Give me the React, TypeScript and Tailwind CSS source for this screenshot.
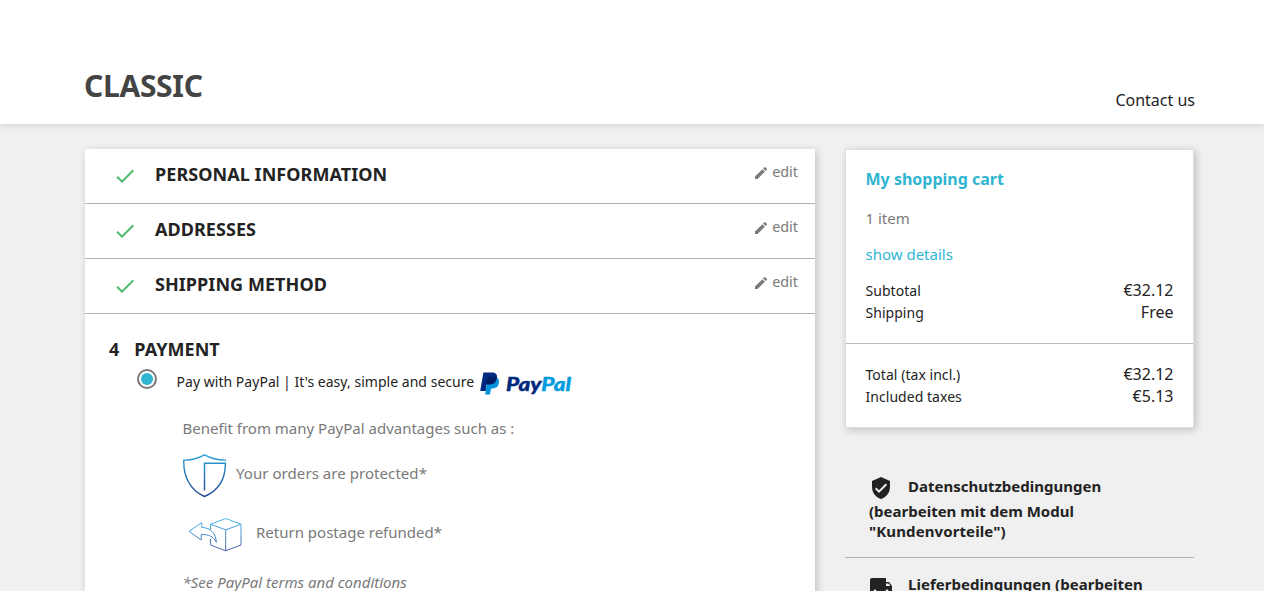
import React from 'react';
import { MdDone, MdLocalShipping, MdVerifiedUser } from 'react-icons/md';

const steps = ['Personal Information', 'Addresses', 'Shipping Method'];

interface SummaryLineProps {
  label: string;
  value: string;
}

const SummaryLine: React.FC<SummaryLineProps> = ({ label, value }) => (
  <div className="flex h-[22px] items-baseline justify-between leading-[22px]">
    <span className="text-sm leading-[22px] tracking-[0.04px]">{label}</span>
    <span className="text-base leading-[22px]">{value}</span>
  </div>
);

const PencilIcon: React.FC = () => (
  <svg width="16" height="16" viewBox="0 0 24 24" fill="currentColor" className="mt-[3px] mr-[3px]">
    <path d="M3 17.25V21h3.75L17.81 9.94l-3.75-3.75L3 17.25zM20.71 7.04a1 1 0 0 0 0-1.41l-2.34-2.34a1 1 0 0 0-1.41 0l-1.83 1.83 3.75 3.75 1.83-1.83z" />
  </svg>
);

const PayPalLogo: React.FC = () => (
  <svg width="92" height="24" viewBox="0 0 92 24" className="shrink-0">
    <path d="M3.4.6H12c4 0 5.6 2.4 5 5.6-.8 4.8-4 6.4-8 6.4H6.6L5.6 19H.2Z" fill="#00297e" />
    <path d="M16.9 5.4c2 1.4 2.4 3.4 1.9 6-.8 3.6-3.4 5-6.6 5H11L10 22.6H5.1l1.5-10Z" fill="#0093dc" />
    <path d="M7.4 6.2c.1-.7.6-1 1.2-1H14c1.2 0 2.2.1 3 .5-.8 5.3-4 6.9-8 6.9H6.3Z" fill="#001c64" />
    <text
      x="26"
      y="18.5"
      textLength="65"
      lengthAdjust="spacingAndGlyphs"
      strokeWidth="0.4"
      className="font-['Lato',sans-serif] text-[18px] font-black italic"
    >
      <tspan fill="#00297e" stroke="#00297e">Pay</tspan>
      <tspan fill="#009ce0" stroke="#009ce0">Pal</tspan>
    </text>
  </svg>
);

const ShieldIcon: React.FC = () => (
  <svg width="44" height="44" viewBox="0 0 44 44" fill="none" className="shrink-0">
    <defs>
      <linearGradient id="shield" x1="0" y1="0" x2="0" y2="44" gradientUnits="userSpaceOnUse">
        <stop stopColor="#2aa5dc" />
        <stop offset="1" stopColor="#1f3f8f" />
      </linearGradient>
    </defs>
    <path
      d="M43 6.1C35 6.3 28 4.5 21.5.9 15 4.500 8 6.300.8 6.100.2 22 7 36.500 21.500 42.500 36 36.500 42.400 24 42.400 9.300H21.500V36.500"
      stroke="url(#shield)"
      strokeWidth="1.4"
    />
  </svg>
);

const ReturnIcon: React.FC = () => (
  <svg width="56" height="36" viewBox="0 0 56 36" fill="none" className="shrink-0">
    <defs>
      <linearGradient id="return" x1="0" y1="0" x2="0" y2="36" gradientUnits="userSpaceOnUse">
        <stop stopColor="#45bdea" />
        <stop offset="1" stopColor="#4a5da6" />
      </linearGradient>
    </defs>
    <g stroke="url(#return)" strokeWidth="1">
      <path d="M2 14.3 14.8 5.7V10.5C23.5 10.5 29 16.5 29.3 25.3 26.500 19.500 21.500 17.300 14.200 17.500V23Z" />
      <path d="M23.5 12.5V7.3L38.7 1.5 54 7.3V28L38.7 33.8 23.5 28V22M23.5 7.3 38.7 12.8 54 7.3M38.7 12.8V33.8" />
    </g>
  </svg>
);

const Header: React.FC = () => (
  <header className="relative flex h-[124px] shrink-0 justify-between bg-white pr-[69px] pl-[84px] shadow-[0_2px_5px_0_rgba(0,0,0,0.11)]">
    <h1 className="pt-[65px] text-[30px] leading-[41px] font-bold tracking-[-0.3px] text-[#444]">CLASSIC</h1>
    <a href="#" className="pt-[88px] text-base leading-6">Contact us</a>
  </header>
);

const Checkout: React.FC = () => (
  <section className="h-[500px] w-[730px] bg-white shadow-[2px_2px_8px_0_rgba(0,0,0,0.2)]">
    {steps.map((title) => (
      <div key={title} className="flex h-[55px] border-b border-[#b3b3b3] pr-[17px] pl-[27.5px]">
        <MdDone className="mt-[15px] size-6 text-[#4cbb6c]" />
        <h2 className="mt-[13px] ml-[18.5px] grow text-lg leading-6 font-bold tracking-[0.06px] uppercase">{title}</h2>
        <a href="#" className="mt-[13px] flex h-5 text-[14.4px] leading-5 text-[#7a7a7a]">
          <PencilIcon />
          edit
        </a>
      </div>
    ))}

    <div className="pt-[23px] pl-6">
      <h2 className="flex gap-[15px] text-lg leading-6 font-bold tracking-[0.06px] uppercase">
        <span>4</span>
        Payment
      </h2>
      <label className="flex pl-7">
        <span className="mt-2 flex size-5 items-center justify-center rounded-full border-2 border-[#7a7a7a] bg-white">
          <span className="size-3 rounded-full bg-[#2fb5d2]" />
        </span>
        <span className="mt-[11px] mr-[6px] ml-[19.5px] text-sm leading-5 tracking-[0.03px]">
          Pay with PayPal | It's easy, simple and secure
        </span>
        <span className="mt-[11px]">
          <PayPalLogo />
        </span>
      </label>
      <div className="pl-[73.5px] text-[15px] leading-5 text-[#7a7a7a]">
        <p className="mt-[22px]">Benefit from many PayPal advantages such as :</p>
        <div className="mt-4 flex gap-[9.5px]">
          <ShieldIcon />
          <span className="mt-[9px] tracking-[0.06px]">Your orders are protected*</span>
        </div>
        <div className="mt-[19px] flex gap-[13px] pl-[4.500px]">
          <ReturnIcon />
          <span className="mt-[5px]">Return postage refunded*</span>
        </div>
        <p className="mt-[19px] italic">*See PayPal terms and conditions</p>
      </div>
    </div>
  </section>
);

const Cart: React.FC = () => (
  <div className="border border-[#dedede] bg-white shadow-[2px_2px_8px_0_rgba(0,0,0,0.2)]">
    <div className="h-[194px] border-b border-[#b9b9b9] pt-[17px] pr-[19.5px] pl-[19.5px]">
      <h2 className="text-base leading-6 font-bold text-[#2fb5d2]">My shopping cart</h2>
      <p className="mt-[17px] text-[15px] leading-5 text-[#7a7a7a]">1 item</p>
      <a href="#" className="mt-4 mb-[15px] block text-[15px] leading-5 text-[#2fb5d2]">show details</a>
      <SummaryLine label="Subtotal" value="€32.12" />
      <SummaryLine label="Shipping" value="Free" />
    </div>
    <div className="h-[83px] pt-[19px] pr-[19.5px] pl-[19.5px]">
      <SummaryLine label="Total (tax incl.)" value="€32.12" />
      <SummaryLine label="Included taxes" value="€5.13" />
    </div>
  </div>
);

const Reassurance: React.FC = () => (
  <ul className="mt-12 text-[15px] leading-5 font-bold">
    <li className="h-[82px] border-b border-[#b3b3b3] pl-6">
      <div className="flex h-[25px] gap-[15px]">
        <MdVerifiedUser className="size-6" />
        <span>Datenschutzbedingungen</span>
      </div>
      <p>(bearbeiten mit dem Modul</p>
      <p className="tracking-[0.1px]">"Kundenvorteile")</p>
    </li>
    <li className="pt-4 pl-6">
      <div className="flex gap-[15px]">
        <MdLocalShipping className="size-6" />
        <span className="tracking-[0.03px]">Lieferbedingungen (bearbeiten</span>
      </div>
    </li>
  </ul>
);

const App: React.FC = () => (
  <div className="flex h-[591px] w-[1264px] flex-col overflow-hidden bg-[#f0f0f0] font-['Noto_Sans',sans-serif] text-[#232323]">
    <Header />
    <main className="flex gap-[30px] pt-[25px] pl-[85px]">
      <Checkout />
      <aside className="w-[349px]">
        <Cart />
        <Reassurance />
      </aside>
    </main>
  </div>
);

export default App;
